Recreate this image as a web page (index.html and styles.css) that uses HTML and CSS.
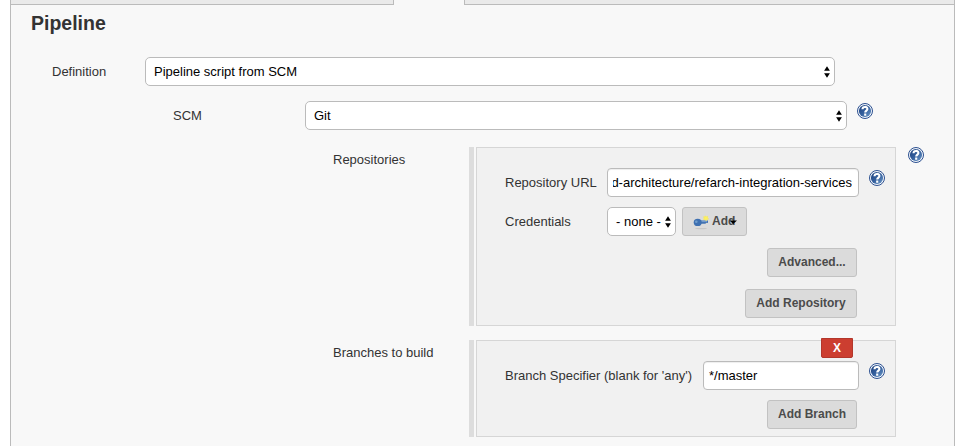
FILE: index.html
```
<!DOCTYPE html>
<html lang="en">
<head>
<meta charset="utf-8">
<title>Pipeline</title>
<link rel="stylesheet" href="styles.css">
</head>
<body>
<svg class="defs" width="0" height="0" aria-hidden="true">
  <defs>
    <linearGradient id="blue" x1="0" y1="0" x2="1" y2="1">
      <stop offset="0" stop-color="#1d407c"/><stop offset=".5" stop-color="#345f9d"/><stop offset="1" stop-color="#6f9bca"/>
    </linearGradient>
    <symbol id="help" viewBox="0 0 16 16">
      <circle cx="8" cy="8" r="7.5" fill="#f5f8fc" stroke="#2c5090" stroke-width="1"/>
      <circle cx="8" cy="8" r="6.1" fill="url(#blue)"/>
      <path d="M5.5 6.2C5.5 3.2 10.4 3.2 10.4 6C10.4 7.6 8.2 7.6 8.2 9.6M8.2 10.6V12.7" fill="none" stroke="#fff" stroke-width="2.1"/>
    </symbol>
    <symbol id="arrows" viewBox="0 0 6 12">
      <path d="M3 0.3L5.9 4.8H.1ZM3 11.7L5.9 7.2H.1Z" fill="#000"/>
    </symbol>
  </defs>
</svg>
<main class="panel">
  <div class="tabs"><div class="tab tab-left"></div><div class="tab tab-right"></div></div>
  <h1>Pipeline</h1>
  <div class="row definition">
    <label>Definition</label>
    <div class="select">Pipeline script from SCM<svg class="arrows"><use href="#arrows"/></svg></div>
  </div>
  <div class="row scm">
    <label>SCM</label>
    <div class="select">Git<svg class="arrows"><use href="#arrows"/></svg></div>
    <svg class="help"><use href="#help"/></svg>
  </div>
  <div class="section repositories">
    <label>Repositories</label>
    <div class="handle"></div>
    <div class="box">
      <div class="field">
        <label>Repository URL</label>
        <div class="input url"><div class="clip"><span>d-architecture/refarch-integration-services</span></div></div>
        <svg class="help"><use href="#help"/></svg>
      </div>
      <div class="field credentials">
        <label>Credentials</label>
        <div class="select small">- none -<svg class="arrows"><use href="#arrows"/></svg></div>
        <button class="add">
          <svg class="key" viewBox="0 0 16 16">
            <ellipse cx="8" cy="14.6" rx="6" ry=".7" fill="#c6c6c6"/>
            <path d="M6 6.6H15V9L13.4 8.8L12.4 9.8H7Z" fill="#4474b2"/>
            <path d="M7 7.3H14" stroke="#7ba3d2"/>
            <ellipse cx="4.7" cy="8.4" rx="4" ry="3.7" fill="#3e70b1"/>
            <circle cx="3.3" cy="7.8" r="1.3" fill="#709dcc"/>
            <path d="M12.3 1.8L13.2 3L14.7 2.3L14.5 3.9L15.7 5L14.1 5.3L13.2 6.7L12.2 5.5L10.5 5.6L11.2 4.2L10.5 2.8L12 3Z" fill="#fff25a" stroke="#f4e967" stroke-width=".8"/>
          </svg>
          <span>Add</span>
          <svg class="caret" viewBox="0 0 8 6"><path d="M.5 1.5H8L4.2 5Z" fill="#000"/></svg>
        </button>
      </div>
      <div class="actions"><button class="b90">Advanced...</button><button class="b112">Add Repository</button></div>
    </div>
    <svg class="help"><use href="#help"/></svg>
  </div>
  <div class="section branches">
    <label>Branches to build</label>
    <div class="handle"></div>
    <div class="box">
      <button class="delete">X</button>
      <div class="field branch">
        <label>Branch Specifier (blank for 'any')</label>
        <div class="input">*/master</div>
        <svg class="help"><use href="#help"/></svg>
      </div>
      <div class="actions"><button class="b90">Add Branch</button></div>
    </div>
  </div>
</main>
</body>
</html>
```
FILE: styles.css
```
* { box-sizing: border-box; }
body { margin: 0; background: #fff; color: #333; font: 13px/29px "Liberation Sans", Arial, sans-serif; overflow: hidden; }
.defs { position: absolute; }
.panel { width: 945px; height: 446px; margin-left: 10px; background: #f8f8f8; border: solid #bbb; border-width: 0 1px; }
.tabs { display: flex; justify-content: space-between; height: 5px; }
.tab { background: #eaeaea; border-bottom: 1px solid #bbb; }
.tab-left { width: 383px; border-right: 1px solid #bbb; }
.tab-right { width: 490px; border-left: 1px solid #bbb; }
h1 { margin: 6px 0 0 20px; font-size: 19.5px; line-height: 24px; height: 24px; }
.row { display: flex; height: 29px; }
.definition { margin: 22px 0 0 41px; }
.definition label { width: 93px; }
.definition .select { width: 690px; }
.scm { margin: 15px 0 0 162px; }
.scm label { width: 132px; }
.scm .select { width: 542px; }
.select, .input { height: 29px; background: #fff; border: 1px solid #bbb; color: #000; line-height: 27px; white-space: nowrap; }
.select { display: flex; justify-content: space-between; align-items: center; padding: 0 4px 0 8px; border-radius: 5px; }
.arrows { width: 6px; height: 12px; flex: none; }
.input { border-radius: 4px; padding: 0 5px; box-shadow: inset 0 1px 1px #eee; }
.help { width: 16px; height: 16px; margin: 2px 0 0 10px; flex: none; }
.section { display: flex; margin-left: 322px; }
.section > label { width: 136px; line-height: 26px; }
.section > .help { margin: 0 0 0 12px; }
.handle { width: 5px; margin-right: 2px; background: #ddd; }
.box { width: 420px; background: #f1f1f1; border: 1px solid #d6d6d6; }
.repositories { margin-top: 17px; height: 179px; }
.branches { margin-top: 14px; height: 97px; }
.field { display: flex; margin-left: 28px; height: 29px; }
.repositories .field label { width: 102px; }
.repositories .field:first-child { margin-top: 20px; }
.field.credentials { margin-top: 10px; }
.url { width: 252px; padding-right: 6px; }
.clip { display: flex; justify-content: flex-end; overflow: hidden; }
.small { width: 69px; }
button { height: 29px; padding: 0; font: bold 12px/27px "Liberation Sans", Arial, sans-serif; color: #4b4b4b; background: #dbdbdb; border: 1px solid #c2c2c2; border-radius: 3px; white-space: nowrap; }
.add { display: flex; align-items: center; width: 65px; margin-left: 6px; padding-left: 10px; }
.key { width: 16px; height: 16px; margin-right: 3px; flex: none; }
.caret { width: 8px; height: 6px; margin-left: -6px; flex: none; }
.actions { display: flex; flex-direction: column; align-items: flex-end; gap: 12px; margin: 12px 38px 0 0; }
.b90 { width: 90px; }
.b112 { width: 112px; }
.delete { display: block; width: 32px; height: 20px; margin: -3px 0 0 344px; color: #fff; background: #cc3e30; border: 1px solid #b3372b; border-radius: 0 0 2px 2px; line-height: 18px; }
.branch { margin-top: 3px; }
.branch label { width: 198px; white-space: nowrap; }
.branch .input { width: 156px; }
.branches .actions { margin-top: 10px; }
```
